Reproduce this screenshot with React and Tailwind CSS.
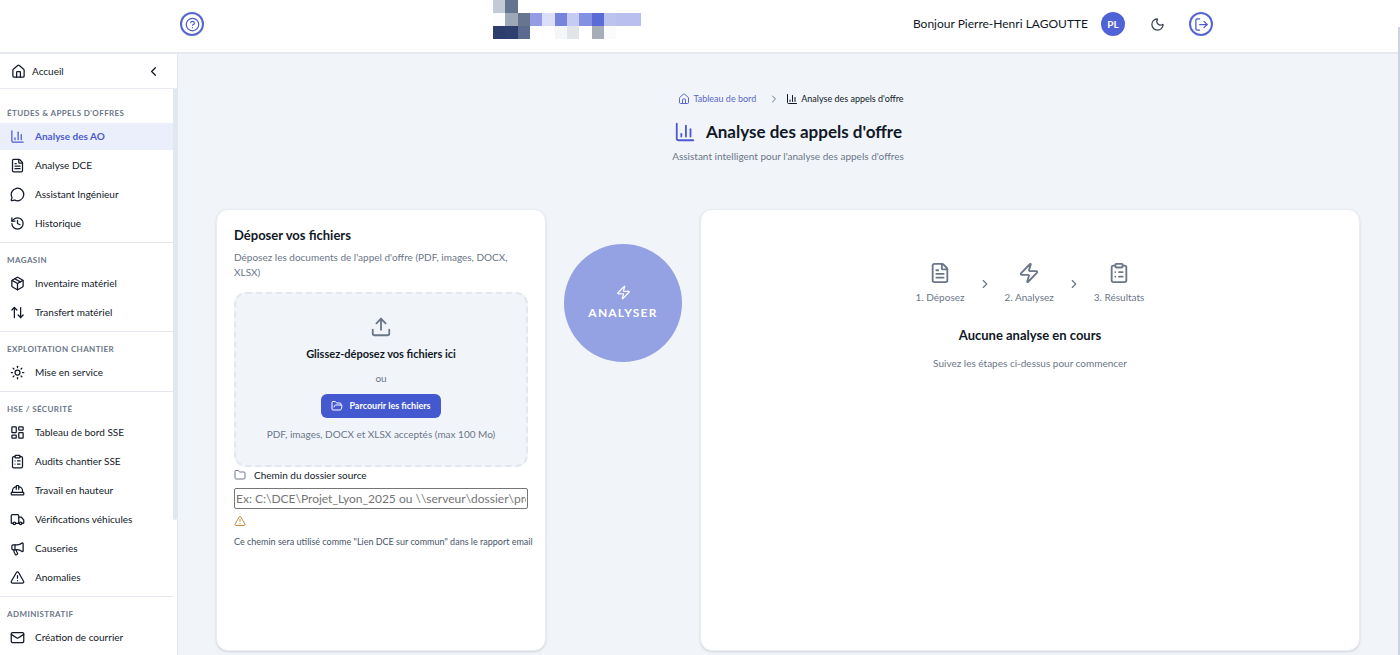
import React, { useState } from 'react';
import {
  ArrowUpDown,
  ChartColumn,
  ChevronLeft,
  ChevronRight,
  CircleQuestionMark,
  ClipboardList,
  FileText,
  Folder,
  FolderOpen,
  HardHat,
  History,
  House,
  LayoutDashboard,
  LogOut,
  Mail,
  Megaphone,
  MessageCircle,
  Moon,
  Package,
  Sun,
  TriangleAlert,
  Truck,
  Upload,
  Zap,
} from 'lucide-react';

const menu = [
  {
    title: "Études & appels d'offres",
    items: [
      { label: 'Analyse des AO', icon: ChartColumn, active: true },
      { label: 'Analyse DCE', icon: FileText },
      { label: 'Assistant Ingénieur', icon: MessageCircle },
      { label: 'Historique', icon: History },
    ],
  },
  {
    title: 'Magasin',
    items: [
      { label: 'Inventaire matériel', icon: Package },
      { label: 'Transfert matériel', icon: ArrowUpDown },
    ],
  },
  {
    title: 'Exploitation chantier',
    items: [{ label: 'Mise en service', icon: Sun }],
  },
  {
    title: 'HSE / Sécurité',
    items: [
      { label: 'Tableau de bord SSE', icon: LayoutDashboard },
      { label: 'Audits chantier SSE', icon: ClipboardList },
      { label: 'Travail en hauteur', icon: HardHat },
      { label: 'Vérifications véhicules', icon: Truck },
      { label: 'Causeries', icon: Megaphone },
      { label: 'Anomalies', icon: TriangleAlert },
    ],
  },
  {
    title: 'Administratif',
    items: [{ label: 'Création de courrier', icon: Mail }],
  },
];

const steps = [
  { label: '1. Déposez', icon: FileText },
  { label: '2. Analysez', icon: Zap },
  { label: '3. Résultats', icon: ClipboardList },
];

// [column, row, colour]
const logoCells = [
  [0, 0, '#c1cad6'], [1, 0, '#66758f'],
  [0, 1, '#fbfcfd'], [1, 1, '#9fa8b6'], [2, 1, '#68758f'], [3, 1, '#949ce4'],
  [4, 1, '#dcdff8'], [5, 1, '#7784de'], [6, 1, '#c6cbf2'], [7, 1, '#8291e2'],
  [8, 1, '#5a6bd6'], [9, 1, '#bdc3ef'], [10, 1, '#bac0ee'], [11, 1, '#b9bfee'],
  [0, 2, '#2c3d6e'], [1, 2, '#2f406e'], [2, 2, '#5c6a90'], [5, 2, '#f5f6f7'],
  [6, 2, '#e2e5e8'], [8, 2, '#a8aeb9'], [9, 2, '#fbfbfb'],
];

const Logo = () => (
  <svg viewBox="0 0 12 3" preserveAspectRatio="none" shapeRendering="crispEdges" className="w-[148px] h-[39px]" aria-hidden="true">
    {logoCells.map(([x, y, fill]) => (
      <rect key={`${x}-${y}`} x={x} y={y} width="1" height="1" fill={fill} />
    ))}
  </svg>
);

const Header = () => (
  <header className="h-[54px] shrink-0 bg-white border-b-2 border-[#e6e9f0]">
    <div className="max-w-[1040px] h-full mx-auto pr-[7px] flex items-start">
      <button type="button" aria-label="Aide" className="mt-3 w-6 h-6 rounded-full border-2 border-[#5565d2] text-[#4a5bd0] flex items-center justify-center">
        <CircleQuestionMark size={15} />
      </button>
      <div className="ml-[289px]">
        <Logo />
      </div>
      <div className="ml-auto mt-3 flex items-center">
        <span className="text-[12px] leading-6">Bonjour Pierre-Henri LAGOUTTE</span>
        <span className="ml-[13px] w-6 h-6 rounded-full bg-[#4f63d6] text-white text-[10px] font-bold flex items-center justify-center">PL</span>
        <button type="button" aria-label="Mode sombre" className="ml-[25px] text-[#374151]">
          <Moon size={15} />
        </button>
        <button type="button" aria-label="Se déconnecter" className="ml-6 w-6 h-6 rounded-full border-2 border-[#5565d2] text-[#4a5bd0] flex items-center justify-center">
          <LogOut size={15} />
        </button>
      </div>
    </div>
  </header>
);

const Sidebar = () => (
  <aside className="w-[178px] shrink-0 bg-white border-r border-[#e2e8f0] flex flex-col overflow-hidden">
    <div className="h-[35px] shrink-0 pl-[11px] pr-4 flex items-center border-b border-[#e8ebf1]">
      <a href="#" className="flex items-center gap-[6px] text-[10px]">
        <House size={15} />
        Accueil
      </a>
      <button type="button" aria-label="Réduire le menu" className="ml-auto">
        <ChevronLeft size={15} />
      </button>
    </div>
    <div className="flex-1 min-h-0 flex">
      <nav className="flex-1 overflow-hidden pt-[7px]">
        {menu.map((group, index) => (
          <section key={group.title} className={`pt-[9px] pb-[3px] ${index > 0 ? 'border-t border-[#e5e7ee]' : ''}`}>
            <h2 className="pl-[7px] mb-[2px] text-[8px] leading-4 font-bold uppercase tracking-wider text-[#6b7688]">{group.title}</h2>
            {group.items.map(({ label, icon: Icon, active }) => (
              <a
                key={label}
                href="#"
                className={`h-[27px] mb-[2px] pl-[10px] flex items-center gap-[10px] text-[10px] whitespace-nowrap ${active ? 'bg-[#ebeffc] text-[#4a5bd0] font-bold' : ''}`}
              >
                <Icon size={15} />
                {label}
              </a>
            ))}
          </section>
        ))}
      </nav>
      <div className="w-1 h-[431px] rounded-b-sm bg-[#e2e8f0]" />
    </div>
  </aside>
);

const UploadCard = () => {
  const [path, setPath] = useState('');

  return (
    <section className="bg-white rounded-xl border border-[#e8ecf3] shadow-sm px-[17px] pt-[15px] min-h-[442px]">
      <h2 className="text-[13px] leading-5 font-bold">Déposer vos fichiers</h2>
      <p className="mt-[5px] text-[10px] leading-[15px] text-[#6b7688]">
        Déposez les documents de l'appel d'offre (PDF, images, DOCX, XLSX)
      </p>

      <div className="mt-3 h-[175px] rounded-xl border-2 border-dashed border-[#e2e6ee] bg-[#f1f5fa] flex flex-col items-center">
        <Upload size={22} className="mt-[22px] text-[#6b7688]" />
        <p className="mt-2 text-[11px] leading-4 font-bold">Glissez-déposez vos fichiers ici</p>
        <p className="mt-2 text-[10px] leading-4 text-[#6b7688]">ou</p>
        <button type="button" className="mt-2 h-6 px-[10px] rounded-md bg-[#4459d0] text-white text-[9px] font-bold flex items-center gap-[6px]">
          <FolderOpen size={12} />
          Parcourir les fichiers
        </button>
        <p className="mt-2 text-[10px] leading-4 text-[#6b7688]">PDF, images, DOCX et XLSX acceptés (max 100 Mo)</p>
      </div>

      <label htmlFor="source" className="flex items-center gap-2 text-[10px] leading-4">
        <Folder size={12} className="text-[#6b7688]" />
        Chemin du dossier source
      </label>
      <input
        id="source"
        type="text"
        value={path}
        onChange={(e) => setPath(e.target.value)}
        placeholder="Ex: C:\DCE\Projet_Lyon_2025 ou \\serveur\dossier\projet"
        className="mt-[5px] block w-full h-[21px] px-px border border-[#767676] rounded-xs text-[12px] placeholder:text-[#757575]"
      />
      <TriangleAlert size={12} className="mt-[6px] text-[#c98a3c]" />
      <p className="mt-[7px] text-[9px] leading-4 text-[#475569] whitespace-nowrap">
        Ce chemin sera utilisé comme "Lien DCE sur commun" dans le rapport email
      </p>
    </section>
  );
};

const ResultsCard = () => (
  <section className="bg-white rounded-xl border border-[#e8ecf3] shadow-sm pt-[52px] min-h-[442px] flex flex-col items-center">
    <ol className="flex items-center text-[#6b7688]">
      {steps.map(({ label, icon: Icon }, index) => (
        <li key={label} className="flex items-center">
          {index > 0 && <ChevronRight size={14} className="mx-[13px]" />}
          <div className="flex flex-col items-center gap-[5px]">
            <Icon size={22} />
            <span className="text-[10px] leading-4">{label}</span>
          </div>
        </li>
      ))}
    </ol>
    <h2 className="mt-5 text-[13px] leading-5 font-bold">Aucune analyse en cours</h2>
    <p className="mt-[10px] text-[10px] leading-4 text-[#6b7688]">Suivez les étapes ci-dessus pour commencer</p>
  </section>
);

const App = () => {
  return (
    <div className="h-screen flex flex-col overflow-hidden bg-[#f1f5fa] text-[#111827] font-['Lato',sans-serif]">
      <Header />
      <div className="flex-1 min-h-0 flex">
        <Sidebar />
        <main className="flex-1 min-w-0 pl-[38px] pr-10 overflow-hidden">
          <div className="pt-[37px] flex flex-col items-center">
            <nav aria-label="Fil d'Ariane" className="pl-[6px] flex items-center text-[9px] leading-4">
              <a href="#" className="flex items-center gap-[3px] text-[#5a67d0]">
                <House size={12} />
                Tableau de bord
              </a>
              <ChevronRight size={12} className="ml-3 mr-[6px] text-[#6b7688]" />
              <span className="flex items-center gap-[3px]">
                <ChartColumn size={12} />
                Analyse des appels d'offre
              </span>
            </nav>
            <h1 className="mt-[13px] flex items-center gap-[10px] text-[17px] leading-6 font-bold">
              <ChartColumn size={22} className="text-[#4a5bd0]" />
              Analyse des appels d'offre
            </h1>
            <p className="mt-1 text-[10px] leading-4 text-[#6b7688]">Assistant intelligent pour l'analyse des appels d'offres</p>
          </div>

          <div className="mt-[45px] grid grid-cols-[minmax(0,1fr)_auto_minmax(0,2fr)] gap-[18px]">
            <UploadCard />
            <button type="button" disabled className="mt-[35px] w-[118px] h-[118px] rounded-full bg-[#94a1e2] text-white text-[12px] leading-4 font-bold tracking-widest flex flex-col items-center justify-center gap-[5px]">
              <Zap size={15} />
              ANALYSER
            </button>
            <ResultsCard />
          </div>
        </main>
      </div>
      <div className="fixed top-[27px] bottom-0 right-0 w-[2px] bg-[#cbd5e1]" />
    </div>
  );
};

export default App;
